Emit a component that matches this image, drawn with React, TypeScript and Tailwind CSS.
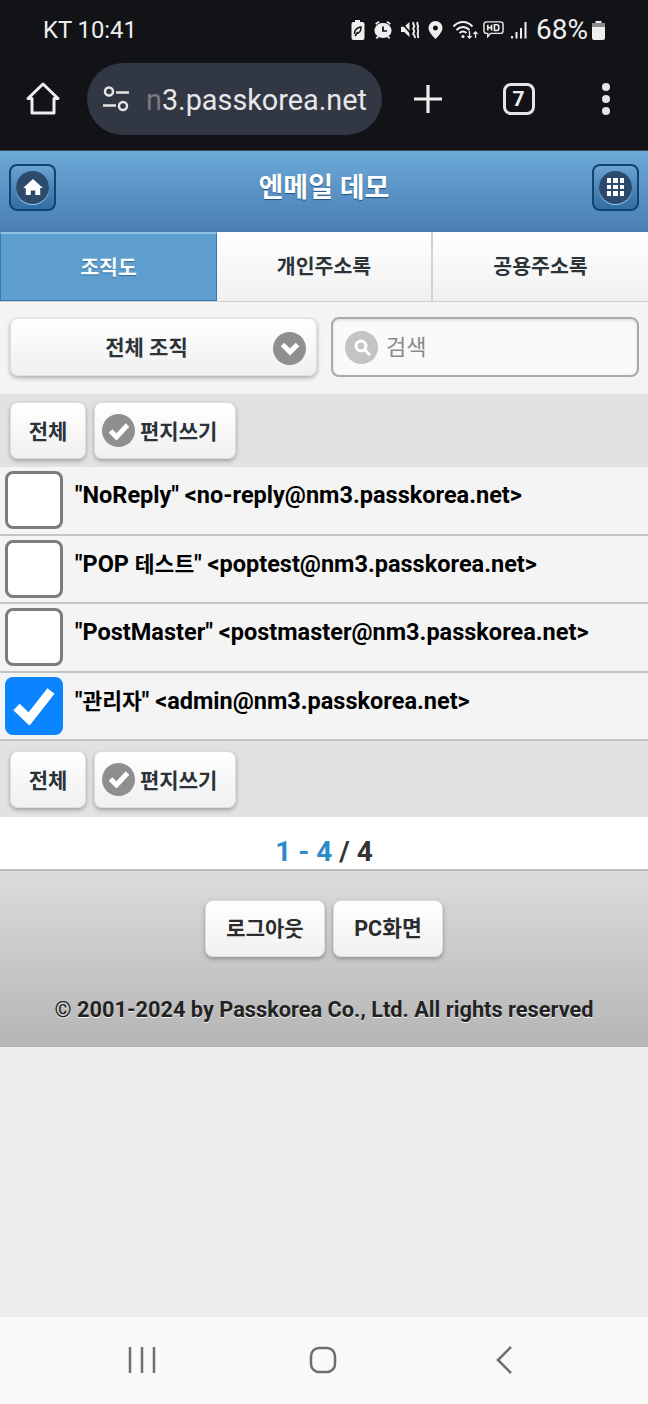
import React from 'react';

const font = "font-['Roboto','Noto_Sans_CJK_KR',sans-serif]";

const contacts = [
  { before: '"NoReply"', ko: '', after: ' <no-reply@nm3.passkorea.net>', checked: false },
  { before: '"POP ', ko: '테스트', after: '" <poptest@nm3.passkorea.net>', checked: false },
  { before: '"PostMaster"', ko: '', after: ' <postmaster@nm3.passkorea.net>', checked: false },
  { before: '"', ko: '관리자', after: '" <admin@nm3.passkorea.net>', checked: true },
];

const StatusIcons = () => (
  <div className="flex items-center text-[#eeeeee]">
    <svg width="14" height="20" viewBox="0 0 14 20" className="mr-[9px]" fill="currentColor">
      <path d="M4 0h5v2h2.500a2 2 0 0 1 2 2v14a2 2 0 0 1-2 2h-9a2 2 0 0 1-2-2V4a2 2 0 0 1 2-2H4z" />
      <path d="M3.500 14c0-4 3-6.500 6.500-7 0 4-2 6.500-5 6.500M4 16l3-4" stroke="#121317" strokeWidth="1.500" fill="none" />
    </svg>
    <svg width="18" height="19" viewBox="0 0 16 19" className="mr-[9px]" fill="currentColor" preserveAspectRatio="none">
      <path d="M1 2.500 4 0l1 1.200-3 2.500zM15 2.500 12 0l-1 1.200 3 2.500zM8 2a7.500 7.500 0 0 1 5 13.100l1.500 2-1.200 1-1.700-2a7.500 7.500 0 0 1-7.200 0l-1.700 2-1.200-1 1.500-2A7.500 7.500 0 0 1 8 2z" />
      <path d="M8 5.500V10h3.500" stroke="#121317" strokeWidth="1.600" fill="none" />
    </svg>
    <svg width="18" height="18" viewBox="0 0 17 17" className="mr-[9px]" fill="currentColor">
      <path d="M0 5.500h3L8 1v14l-5-4.500H0z" />
      <path d="M0 1l12 14" stroke="#121317" strokeWidth="1.500" />
      <path d="M12 1c-2 2 2 3 0 5s2 3 0 5 2 2 1 5M16 1c-2 2 1 3 0 5s1 3 0 5 1 2 0 5" stroke="currentColor" strokeWidth="1.800" fill="none" />
    </svg>
    <svg width="15" height="18" viewBox="0 0 15 18" className="mr-[9px]" fill="currentColor">
      <path fillRule="evenodd" d="M7.500 0A7 7 0 0 1 14.500 7c0 4-4.500 8.500-7 11-2.500-2.500-7-7-7-11a7 7 0 0 1 7-7zm0 4.500a2.500 2.500 0 1 0 0 5 2.500 2.500 0 0 0 0-5z" />
    </svg>
    <svg width="27" height="20" viewBox="0 0 26 20" className="mr-[4px]" fill="none" stroke="currentColor" strokeWidth="2">
      <path d="M1 6.500c5.500-6 13.500-6 19 0M4 10c4-4 9-4 13 0M7 13c2.500-2.200 4.500-2.200 7 0" />
      <circle cx="10.500" cy="16.500" r="1.600" fill="currentColor" stroke="none" />
      <path d="M17 11v7M15 16l2 2 2-2M23 18v-6M21 14l2-2 2 2" strokeWidth="1.300" />
    </svg>
    <svg width="21" height="20" viewBox="0 0 22 20" className="mr-[7px]" fill="none" stroke="currentColor">
      <path d="M3.500 1.500h15a2.500 2.500 0 0 1 2.500 2.500v7a2.500 2.500 0 0 1-2.500 2.500H8l-3 3.500v-3.500H3.500A2.500 2.500 0 0 1 1 11V4a2.500 2.500 0 0 1 2.500-2.500z" strokeWidth="1.500" />
      <path d="M5 4.500v6M9 4.500v6M5 7.500h4M12 4.500v6h2.500a2 2 0 0 0 2-2v-2a2 2 0 0 0-2-2z" strokeWidth="1.700" />
    </svg>
    <svg width="16" height="17" viewBox="0 0 16 17" className="mr-[9px]" fill="currentColor">
      <rect x="0" y="14" width="2" height="2.500" />
      <rect x="4.500" y="10" width="2" height="6.500" />
      <rect x="9" y="6" width="2" height="10.500" />
      <rect x="13.500" y="0" width="2" height="16.500" />
    </svg>
    <span className={`${font} text-[28px] leading-none text-[#eeeeee] mr-[4px]`}>68%</span>
    <svg width="13" height="19" viewBox="0 0 13 19" fill="currentColor">
      <path d="M3.500 0h6v2H11a2 2 0 0 1 2 2v13a2 2 0 0 1-2 2H2a2 2 0 0 1-2-2V4a2 2 0 0 1 2-2h1.500z" />
      <rect x="0" y="2" width="13" height="4" fill="#8c8c8c" />
    </svg>
  </div>
);

const BrowserBar = () => (
  <div className="h-[151px] bg-[#121317] border-b border-[#3a4450] flex flex-col">
    <div className="h-[62px] pl-[43px] pr-[43px] pt-[18px] flex items-start justify-between">
      <span className={`${font} text-[23.800px] leading-[24px] text-[#eeeeee]`}>KT 10:41</span>
      <div className="h-[24px] flex items-center">
        <StatusIcons />
      </div>
    </div>
    <div className="flex items-center h-[74px]">
      <div className="w-[87px] flex justify-center">
        <svg width="34" height="34" viewBox="0 0 34 34" fill="none" stroke="#eeeeee" strokeWidth="3" strokeLinejoin="round" className="-ml-[1px]">
          <path d="M2 16.500 17 2l15 14.500h-4V31H6V16.500z" />
        </svg>
      </div>
      <div className="w-[295px] h-[72px] rounded-full bg-[#323744] flex items-center pl-[14px] overflow-hidden relative">
        <svg width="28" height="28" viewBox="0 0 28 28" fill="none" stroke="#e5e5e5" strokeWidth="2.500" className="shrink-0 ml-[1px]">
          <circle cx="7" cy="6.500" r="4" />
          <path d="M14 7.500h13M1 20.500h13" />
          <circle cx="21" cy="21" r="4" />
        </svg>
        <span className={`${font} ml-[16px] mt-[2px] text-[28.800px] leading-none text-[#e7e7ea] whitespace-nowrap`}>
          <span className="text-[#77797f]">n</span>3.passkorea.net
        </span>
      </div>
      <div className="w-[92px] flex justify-center">
        <svg width="30" height="30" viewBox="0 0 30 30" stroke="#eeeeee" strokeWidth="3.200">
          <path d="M15 1v28M1 15h28" />
        </svg>
      </div>
      <div className="w-[89px] flex justify-center">
        <div className={`${font} w-[32px] h-[32px] rounded-[8px] border-[3px] border-[#e5e5e5] flex items-center justify-center text-[#eeeeee] text-[21px] font-bold leading-none`}>
          7
        </div>
      </div>
      <div className="w-[85px] flex flex-col items-center gap-[4px]">
        <div className="w-[8px] h-[8px] rounded-full bg-[#e5e5e5]" />
        <div className="w-[8px] h-[8px] rounded-full bg-[#e5e5e5]" />
        <div className="w-[8px] h-[8px] rounded-full bg-[#e5e5e5]" />
      </div>
    </div>
  </div>
);

const HeaderButton = ({ children }: { children: React.ReactNode }) => (
  <div className="w-[47px] h-[47px] rounded-[8px] border-2 border-[#0f4570] bg-gradient-to-b from-[#6ba3d0] to-[#2f6da3] flex items-center justify-center">
    <div className="w-[33px] h-[33px] rounded-full bg-[#2c4a6c] shadow-[0_1px_0_#9cc4e6] flex items-center justify-center">
      {children}
    </div>
  </div>
);

const Header = () => (
  <div className="h-[81px] bg-gradient-to-b from-[#6ba9d7] to-[#4a7eb3] flex items-center justify-between pl-[9px] pr-[9px] pb-[9px]">
    <HeaderButton>
      <svg width="20" height="18" viewBox="0 0 22 20" fill="#ffffff">
        <path d="M11 1 22 11h-3v8h-5.500v-5h-5v5H3v-8H0z" />
      </svg>
    </HeaderButton>
    <div className={`${font} mt-[2px] text-[27px] font-bold leading-none text-white [text-shadow:0_1px_1px_#24507c]`}>엔메일 데모</div>
    <HeaderButton>
      <div className="grid grid-cols-3 gap-[2px]">
        {Array.from({ length: 9 }).map((_, i) => (
          <div key={i} className="w-[4.500px] h-[4.500px] bg-white" />
        ))}
      </div>
    </HeaderButton>
  </div>
);

const Tabs = () => (
  <div className={`${font} h-[70px] grid grid-cols-[217px_216px_215px] border-b border-[#d0d0d0] text-[20.500px] font-bold`}>
    <div className="bg-[#5f9fcf] border border-[#2f79ad] border-t-[#8dc0e4] border-t-2 flex items-center justify-center text-white [text-shadow:0_1px_1px_#2f6d9f]">
      <span className="mt-[2px]">조직도</span>
    </div>
    <div className="bg-gradient-to-b from-white to-[#f0f0f0] border-r-2 border-[#d2d2d2] flex items-center justify-center text-[#2b3338]">
      <span className="mt-[2px]">개인주소록</span>
    </div>
    <div className="bg-gradient-to-b from-white to-[#f0f0f0] flex items-center justify-center text-[#2b3338]">
      <span className="mt-[2px]">공용주소록</span>
    </div>
  </div>
);

const Filters = () => (
  <div className={`${font} h-[92px] bg-[#f4f4f4] flex items-center gap-[14px] pl-[10px] pb-[2px]`}>
    <div className="relative w-[307px] h-[58px] rounded-[8px] bg-gradient-to-b from-white to-[#f0f0f0] border border-[#dddddd] shadow-[0_2px_4px_rgba(0,0,0,0.3)] flex items-center justify-center pr-[34px]">
      <span className="mt-[4px] text-[21px] font-bold text-[#2b3338]">전체 조직</span>
      <div className="absolute right-[10px] top-[13px] w-[33px] h-[33px] rounded-full bg-[#8f8f8f] flex items-center justify-center">
        <svg width="20" height="14" viewBox="0 0 20 14" fill="none" stroke="#ffffff" strokeWidth="5">
          <path d="M2.500 2.500 10 10l7.500-7.500" />
        </svg>
      </div>
    </div>
    <div className="w-[308px] h-[60px] rounded-[8px] bg-[#fafafa] border-2 border-[#aaaaaa] shadow-[inset_0_1px_3px_rgba(0,0,0,0.15)] flex items-center pl-[12px]">
      <div className="w-[33px] h-[33px] rounded-full bg-[#c4c4c4] flex items-center justify-center">
        <svg width="18" height="18" viewBox="0 0 18 18" fill="none" stroke="#ffffff" strokeWidth="3">
          <circle cx="8" cy="8" r="5" />
          <path d="m12 12 5 5" />
        </svg>
      </div>
      <span className="ml-[8px] mt-[1px] text-[22px] text-[#8a8a8a] leading-none">검색</span>
    </div>
  </div>
);

const ToolButton = ({ children, className }: { children: React.ReactNode; className: string }) => (
  <div className={`h-[57px] rounded-[8px] bg-gradient-to-b from-white to-[#f0f0f0] border border-[#dddddd] shadow-[0_2px_4px_rgba(0,0,0,0.3)] flex items-center ${className}`}>
    {children}
  </div>
);

const Toolbar = ({ className }: { className: string }) => (
  <div className={`${font} bg-[#e2e2e2] flex items-center gap-[8px] px-[10px] ${className}`}>
    <ToolButton className="w-[76px] justify-center">
      <span className="mt-[5px] text-[21px] font-bold text-[#2b3338]">전체</span>
    </ToolButton>
    <ToolButton className="w-[142px] pl-[7px]">
      <div className="w-[33px] h-[33px] rounded-full bg-[#8f8f8f] flex items-center justify-center">
        <svg width="22" height="18" viewBox="0 0 22 18" fill="none" stroke="#ffffff" strokeWidth="5">
          <path d="M2.500 9 8.500 15 19.500 3" />
        </svg>
      </div>
      <span className="ml-[5px] mt-[5px] text-[21px] font-bold text-[#2b3338] whitespace-nowrap">편지쓰기</span>
    </ToolButton>
  </div>
);

const ContactRow = ({ before, ko, after, checked }: { before: string; ko: string; after: string; checked: boolean }) => (
  <div className={`${font} h-[68.500px] bg-[#f4f4f4] border-b-2 border-[#c4c4c4] flex items-center pl-[5px]`}>
    {checked ? (
      <div className="w-[58px] h-[58px] rounded-[8px] bg-[#0a84ff] flex items-center justify-center">
        <svg width="42" height="38" viewBox="0 0 42 38" fill="none" stroke="#ffffff" strokeWidth="9">
          <path d="M3.500 20 16 32 38 4" />
        </svg>
      </div>
    ) : (
      <div className="w-[58px] h-[58px] rounded-[8px] bg-white border-[3px] border-[#7c7c7c]" />
    )}
    <span className="ml-[12px] -mt-[9px] text-[23.500px] font-bold text-black whitespace-pre">
      {before}
      <span className="text-[21.500px]">{ko}</span>
      {after}
    </span>
  </div>
);

const Footer = () => (
  <div className={`${font} h-[178px] border-t-2 border-[#bdbdbd] bg-gradient-to-b from-[#dcdcdc] to-[#b5b5b5] flex flex-col items-center`}>
    <div className="flex gap-[8px] mt-[29px]">
      <ToolButton className="w-[120px] justify-center">
        <span className="mt-[2px] text-[21px] font-bold text-[#2b2b2b]">로그아웃</span>
      </ToolButton>
      <ToolButton className="w-[110px] justify-center">
        <span className="mt-[2px] text-[21.500px] font-bold text-[#2b2b2b]">PC화면</span>
      </ToolButton>
    </div>
    <div className="mt-[42px] text-[21.750px] font-bold leading-none text-[#222222] [text-shadow:0_1px_0_#f2f2f2]">
      © 2001-2024 by Passkorea Co., Ltd. All rights reserved
    </div>
  </div>
);

const NavBar = () => (
  <div className="h-[87px] bg-[#f9f9f9] flex items-center">
    <div className="w-[285px] flex justify-center">
      <svg width="28" height="28" viewBox="0 0 28 28" stroke="#6e6e6e" strokeWidth="2.500" className="-mt-[2px]">
        <path d="M2 1v26M14 1v26M26 1v26" />
      </svg>
    </div>
    <div className="w-[76px] flex justify-center">
      <svg width="28" height="28" viewBox="0 0 28 28" fill="none" stroke="#6e6e6e" strokeWidth="2.500" className="-mt-[2px]">
        <rect x="2" y="2" width="24" height="24" rx="8" />
      </svg>
    </div>
    <div className="w-[288px] flex justify-center">
      <svg width="20" height="30" viewBox="0 0 20 30" fill="none" stroke="#6e6e6e" strokeWidth="2.500" className="-mt-[2px]">
        <path d="M17 2 4 15l13 13" />
      </svg>
    </div>
  </div>
);

export default function App() {
  return (
    <div className="w-[648px] h-[1404px] bg-[#eeeeee] flex flex-col overflow-hidden">
      <BrowserBar />
      <Header />
      <Tabs />
      <Filters />
      <Toolbar className="h-[73px]" />
      {contacts.map((c) => (
        <ContactRow key={c.after} before={c.before} ko={c.ko} after={c.after} checked={c.checked} />
      ))}
      <Toolbar className="h-[76px]" />
      <div className={`${font} h-[52px] bg-white flex items-center justify-center text-[28px] font-bold leading-none pt-[18px] pb-[0px]`}>
        <span className="text-[#2e8bc9]">1 - 4</span>
        <span className="text-[#333333] ml-[7px]">/ 4</span>
      </div>
      <Footer />
      <div className="flex-1" />
      <NavBar />
    </div>
  );
}
